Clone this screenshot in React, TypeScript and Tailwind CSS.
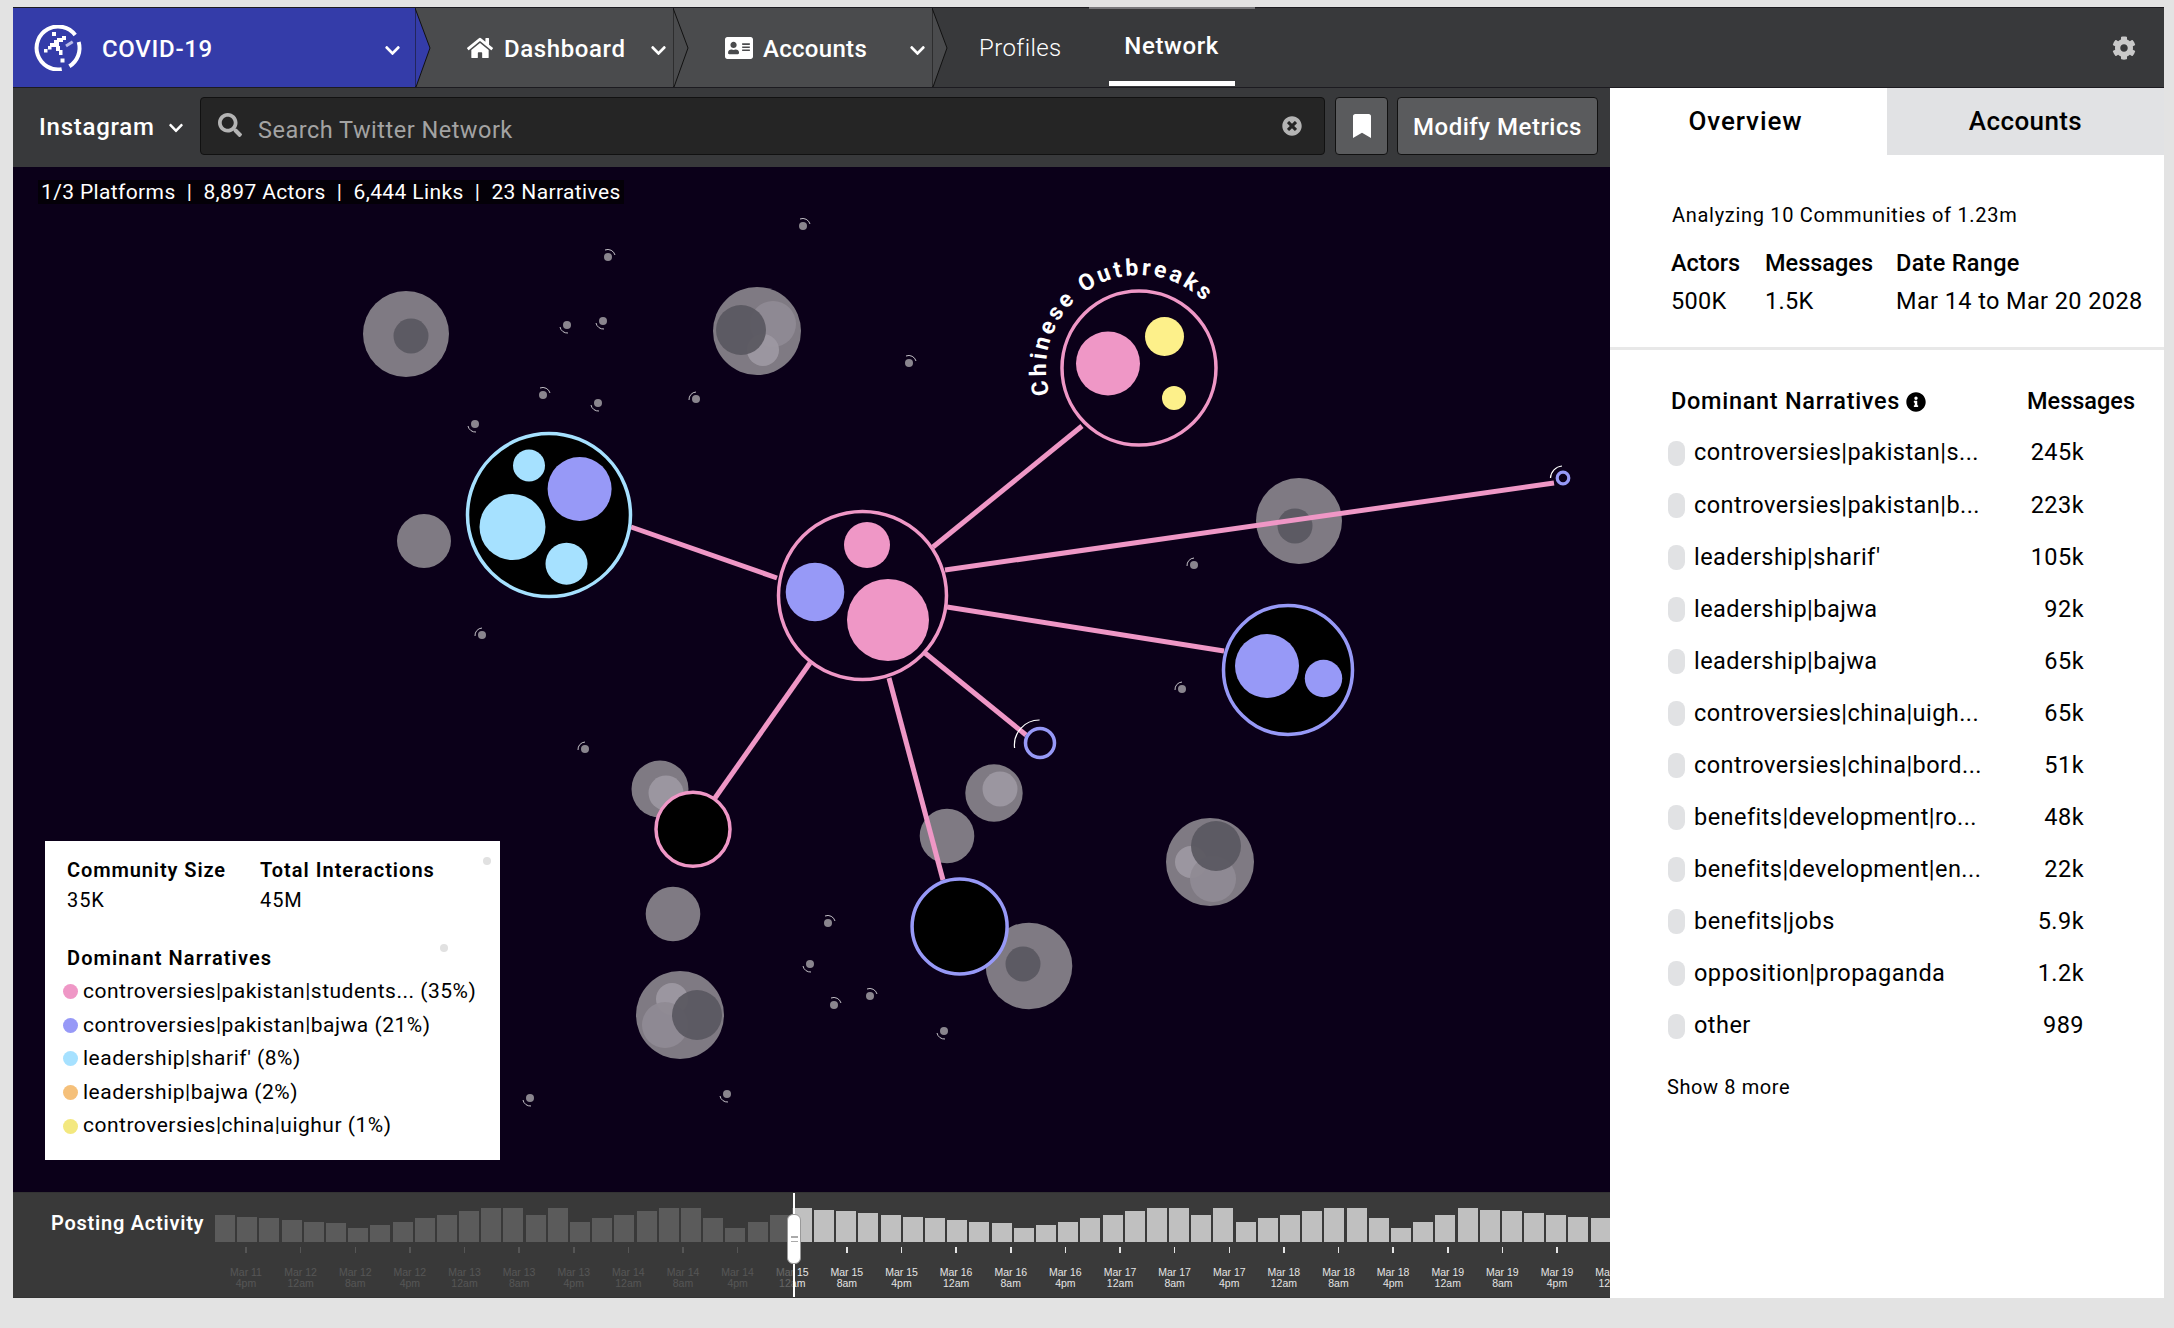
import { FaAddressCard, FaBookmark, FaChevronDown, FaCog, FaHome, FaInfoCircle, FaSearch, FaTimesCircle } from 'react-icons/fa'

const narratives = [
  ['controversies|pakistan|s...', '245k'],
  ['controversies|pakistan|b...', '223k'],
  ["leadership|sharif'", '105k'],
  ['leadership|bajwa', '92k'],
  ['leadership|bajwa', '65k'],
  ['controversies|china|uigh...', '65k'],
  ['controversies|china|bord...', '51k'],
  ['benefits|development|ro...', '48k'],
  ['benefits|development|en...', '22k'],
  ['benefits|jobs', '5.9k'],
  ['opposition|propaganda', '1.2k'],
  ['other', '989'],
]

const legend = [
  ['bg-[#ef97c6]', 'controversies|pakistan|students... (35%)'],
  ['bg-[#9799f7]', 'controversies|pakistan|bajwa (21%)'],
  ['bg-[#a6e1ff]', "leadership|sharif' (8%)"],
  ['bg-[#f5c07a]', 'leadership|bajwa (2%)'],
  ['bg-[#f3e87f]', 'controversies|china|uighur (1%)'],
]

const pattern = [100, 95, 90, 85, 80, 75, 70, 65, 60, 55, 40, 50, 60, 70, 80, 90, 100, 100, 80, 100, 60, 70, 80, 90, 100, 100, 70, 40, 60, 80]
const bars = Array.from({ length: 64 }, (_, i) => pattern[(i + 4) % 30])

const ticks = [
  ['Mar 11', '4pm'], ['Mar 12', '12am'], ['Mar 12', '8am'], ['Mar 12', '4pm'], ['Mar 13', '12am'], ['Mar 13', '8am'],
  ['Mar 13', '4pm'], ['Mar 14', '12am'], ['Mar 14', '8am'], ['Mar 14', '4pm'], ['Mar 15', '12am'], ['Mar 15', '8am'],
  ['Mar 15', '4pm'], ['Mar 16', '12am'], ['Mar 16', '8am'], ['Mar 16', '4pm'], ['Mar 17', '12am'], ['Mar 17', '8am'],
  ['Mar 17', '4pm'], ['Mar 18', '12am'], ['Mar 18', '8am'], ['Mar 18', '4pm'], ['Mar 19', '12am'], ['Mar 19', '8am'],
  ['Mar 19', '4pm'], ['Mar 20', '12am'],
]

// page coordinates, the svg viewBox is offset to match
const tinyDots: [number, number, string][] = [
  [608, 257, 'tr'], [803, 226, 'tr'], [567, 325, 'bl'], [603, 321, 'bl'], [909, 363, 'tr'], [543, 395, 'tr'],
  [598, 403, 'bl'], [696, 399, 'tl'], [475, 424, 'bl'], [482, 635, 'tl'], [585, 749, 'tl'], [828, 923, 'tr'],
  [810, 964, 'bl'], [870, 996, 'tr'], [834, 1005, 'tr'], [944, 1031, 'bl'], [727, 1094, 'bl'], [530, 1098, 'bl'],
  [1194, 565, 'tl'], [1182, 689, 'tl'],
]

const grayNodes: [number, number, number][] = [
  [406, 334, 43], [757, 331, 44], [424, 541, 27], [1299, 521, 43], [660, 789, 28.5], [673, 914, 27.3],
  [680, 1015, 44], [994, 793, 28.7], [947, 836, 27.3], [1029, 966, 43.3], [1210, 862, 44],
]

const innerNodes: [number, number, number, string][] = [
  [411, 336, 17.5, '#5b5861'],
  [773, 324, 23, '#8f8a93'], [763, 350, 16, '#9d98a1'], [741, 330, 25, '#5b5861'],
  [1295, 526, 17.5, '#5b5861'],
  [666, 793, 17.5, '#9d98a1'],
  [672, 999, 16, '#9d98a1'], [665, 1025, 23, '#8f8a93'], [697, 1015, 25, '#5b5861'],
  [1000, 789, 17.5, '#9d98a1'],
  [1023, 964, 17.5, '#5b5861'],
  [1191, 862, 16, '#9d98a1'], [1213, 879, 23, '#8f8a93'], [1216, 846, 25, '#5b5861'],
]

const links: [number, number, number, number][] = [
  [631, 527, 777, 578], [933, 547, 1082, 426], [945, 570, 1554, 483], [947, 607, 1224, 651],
  [925, 653, 1026, 735], [810, 663, 715, 798], [889, 678, 943, 880],
]

function arcFor(x: number, y: number, dir: string) {
  if (dir === 'tl') return `M${x - 7} ${y + 1}A7.5 7.5 0 0 1 ${x} ${y - 7}`
  if (dir === 'tr') return `M${x - 3} ${y - 7}A7.5 7.5 0 0 1 ${x + 7} ${y - 2}`
  return `M${x - 7} ${y + 2}A7.5 7.5 0 0 0 ${x + 1} ${y + 8}`
}

function Logo() {
  return (
    <svg width="50" height="46" viewBox="0 0 50 46" className="shrink-0">
      <g fill="none" stroke="#fff" strokeWidth="4">
        <path d="M42.2 10A21.5 21.5 0 1 0 28.7 44.2" />
        <path d="M36.4 41.2A21.5 21.5 0 0 0 45.7 17" />
      </g>
      <g fill="#fff">
        <rect x="19" y="7" width="4" height="4" />
        <rect x="29" y="11" width="4" height="4" />
        <rect x="24" y="13" width="6" height="4" />
        <rect x="21" y="15" width="5" height="7" />
        <rect x="17" y="18" width="4" height="4" />
        <rect x="11" y="24" width="3.5" height="3.5" />
        <rect x="15" y="21" width="3.5" height="3.5" />
        <rect x="23" y="21" width="4" height="5" />
        <rect x="26" y="25" width="3.5" height="5" />
        <rect x="27.5" y="33.5" width="4" height="4" />
      </g>
      <path d="M33 21L39.7 16.7" stroke="#b9bce8" strokeWidth="3" />
    </svg>
  )
}

function Network() {
  return (
    <svg className="absolute inset-0" width="1597" height="1025" viewBox="13 167 1597 1025">
      {grayNodes.map(([x, y, r]) => (
        <circle key={`${x}-${y}`} cx={x} cy={y} r={r} fill="#7f7a83" />
      ))}
      {innerNodes.map(([x, y, r, c]) => (
        <circle key={`${x}-${y}`} cx={x} cy={y} r={r} fill={c} opacity={0.95} />
      ))}
      {tinyDots.map(([x, y, dir]) => (
        <g key={`${x}-${y}`}>
          <circle cx={x} cy={y} r="4" fill="#8a858e" />
          <path d={arcFor(x, y, dir)} fill="none" stroke="#c4c1c7" strokeWidth="1" />
        </g>
      ))}
      {links.map(([a, b, c, d]) => (
        <line key={`${a}-${b}`} x1={a} y1={b} x2={c} y2={d} stroke="#ef97c6" strokeWidth="5" />
      ))}

      {/* communities */}
      <circle cx="549" cy="515" r="81.5" fill="#000" stroke="#a6e1ff" strokeWidth="3.5" />
      <circle cx="512.5" cy="527" r="33" fill="#a6e1ff" />
      <circle cx="529" cy="465.5" r="16" fill="#a6e1ff" />
      <circle cx="566.5" cy="563.7" r="21" fill="#a6e1ff" />
      <circle cx="579.6" cy="489" r="32" fill="#9799f7" />

      <circle cx="862.5" cy="595.5" r="84" fill="#0b0019" stroke="#ef97c6" strokeWidth="3.5" />
      <circle cx="867" cy="545" r="23" fill="#ef97c6" />
      <circle cx="815" cy="592" r="29.3" fill="#9799f7" />
      <circle cx="888" cy="620" r="41" fill="#ef97c6" />

      <circle cx="1139" cy="368" r="77" fill="#0b0019" stroke="#ef97c6" strokeWidth="3.5" />
      <circle cx="1108" cy="363.5" r="32" fill="#ef97c6" />
      <circle cx="1164.5" cy="336.5" r="19.5" fill="#fdf08a" />
      <circle cx="1174" cy="398" r="12" fill="#fdf08a" />

      <circle cx="1288" cy="670" r="64.5" fill="#000" stroke="#9799f7" strokeWidth="3.5" />
      <circle cx="1267" cy="666" r="32" fill="#9799f7" />
      <circle cx="1323.5" cy="678.5" r="18.7" fill="#9799f7" />

      <circle cx="693" cy="829.3" r="37" fill="#000" stroke="#ef97c6" strokeWidth="3.5" />
      <circle cx="959.6" cy="926.5" r="47.5" fill="#000" stroke="#9799f7" strokeWidth="3.5" />

      <circle cx="1040" cy="743" r="14.5" fill="none" stroke="#9799f7" strokeWidth="3.5" />
      <path d="M1014.6 748A25 25 0 0 1 1039.6 720" fill="none" stroke="#fff" strokeWidth="1.2" />
      <circle cx="1563" cy="478" r="5.8" fill="none" stroke="#9799f7" strokeWidth="3.2" />
      <path d="M1550.5 478A12.5 12.5 0 0 1 1562 466" fill="none" stroke="#fff" strokeWidth="1.2" />

      <path id="outbreaks" d="M1049.7 394A93 93 0 1 1 1228.3 394" fill="none" />
      <text fill="#fff" fontSize="23" fontWeight="700" letterSpacing="3" fontFamily="Roboto, sans-serif">
        <textPath href="#outbreaks">Chinese Outbreaks</textPath>
      </text>
    </svg>
  )
}

function Timeline() {
  return (
    <div className="relative flex h-[106px] overflow-hidden border-y border-[#333] bg-[#3a3a3a]">
      <div className="relative z-20 w-[202px] shrink-0 pl-[38px] pt-[18px] text-[20px] leading-[24px] font-semibold tracking-[0.75px] text-white">Posting Activity</div>
      <div className="min-w-0 flex-1 overflow-hidden pt-[15px]">
        <div className="flex h-[34px] items-end gap-[2.2px]">
          {bars.map((h, i) => (
            <div key={i} className="w-[20px] shrink-0 bg-[#c0c0c0]" style={{ height: `${h * 0.34}px` }} />
          ))}
        </div>
        <div className="ml-[3.7px] flex font-['Liberation_Sans',sans-serif] text-[10.5px] leading-[11px]">
          {ticks.map(([d, t], i) => (
            <div key={i} className={`flex w-[54.63px] shrink-0 flex-col items-center ${i < 10 ? 'text-[#a8a8a8]' : 'text-[#e4e4e4]'}`}>
              <div className={`mt-[5px] h-[6px] w-[1.5px] ${i < 10 ? 'bg-[#a8a8a8]' : 'bg-[#e4e4e4]'}`} />
              <div className="mt-[14px]">{d}</div>
              <div>{t}</div>
            </div>
          ))}
        </div>
      </div>
      <div className="absolute inset-y-0 left-0 z-10 w-[781px] bg-[#3a3a3a]/75" />
      <div className="absolute inset-y-0 left-[780px] z-10 w-[2px] bg-white" />
      <div className="absolute left-[774px] top-[21px] z-10 flex h-[50px] w-[14px] flex-col items-center justify-center gap-[3px] rounded-[6px] border border-[#999] bg-white">
        <div className="h-[1.5px] w-[7px] bg-[#aaa]" />
        <div className="h-[1.5px] w-[7px] bg-[#aaa]" />
      </div>
    </div>
  )
}

export default function App() {
  return (
    <div className="h-[1328px] w-[2174px] overflow-hidden bg-[#e3e3e3] pl-[13px] pt-[7px] font-[Roboto,sans-serif]">
      <div className="flex h-[81px] w-[2151px] border-y border-[#1c1b20] bg-[#38393b] text-white">
        <div className="relative z-30 flex w-[402px] items-center bg-[#343ca9] pl-[20px]">
          <Logo />
          <span className="ml-[19px] pt-[2px] text-[24px] font-medium tracking-[0.7px]">COVID-19</span>
          <FaChevronDown className="absolute left-[371px] top-[34px] text-[17px]" />
          <svg className="absolute left-full top-0" width="16" height="79" viewBox="0 0 16 79">
            <path d="M0 0L15 40L1 79H0Z" fill="#343ca9" stroke="#111" strokeWidth="1" />
          </svg>
        </div>
        <div className="relative z-20 flex w-[258px] items-center bg-[#4a4b4d] pl-[52px]">
          <FaHome className="text-[26px]" />
          <span className="ml-[11px] pt-[2px] text-[24px] font-medium tracking-[0.6px]">Dashboard</span>
          <FaChevronDown className="absolute left-[235px] top-[34px] text-[17px]" />
          <svg className="absolute left-full top-0" width="16" height="79" viewBox="0 0 16 79">
            <path d="M0 0L15 40L1 79H0Z" fill="#4a4b4d" stroke="#111" strokeWidth="1" />
          </svg>
        </div>
        <div className="relative z-10 flex w-[259px] items-center bg-[#4a4b4d] pl-[52px]">
          <FaAddressCard className="text-[28px]" />
          <span className="ml-[10px] pt-[2px] text-[24px] font-medium tracking-[0.3px]">Accounts</span>
          <FaChevronDown className="absolute left-[236px] top-[34px] text-[17px]" />
          <svg className="absolute left-full top-0" width="16" height="79" viewBox="0 0 16 79">
            <path d="M0 0L15 40L1 79H0Z" fill="#4a4b4d" stroke="#111" strokeWidth="1" />
          </svg>
        </div>
        <div className="ml-[47px] flex items-center text-[24px] font-light tracking-[0.4px]">Profiles</div>
        <div className="relative ml-[47px] flex w-[126px] items-center justify-center pb-[3px] text-[24px] font-medium tracking-[0.6px]">
          Network
          <div className="absolute inset-x-0 bottom-[1px] h-[5px] bg-white" />
          <div className="absolute -inset-x-[20px] -top-[1px] h-[2px] bg-[#77777a]" />
        </div>
        <div className="ml-auto flex items-center pr-[28px]">
          <FaCog className="text-[24px] text-[#c9c9c9]" />
        </div>
      </div>

      <div className="flex h-[1210px] w-[2151px]">
        <div className="flex w-[1597px] flex-col">
          <div className="flex h-[79px] items-start bg-[#38393b] pt-[9px]">
            <div className="flex h-[58px] w-[187px] shrink-0 items-center pt-[1px] pl-[26px] text-[24px] font-medium tracking-[0.75px] text-white">
              Instagram
              <FaChevronDown className="ml-[13px] mt-[3px] text-[16px]" />
            </div>
            <div className="flex h-[58px] w-[1125px] items-center rounded-[4px] border border-[#111] bg-[#252525] pl-[17px] pr-[22px]">
              <FaSearch className="mb-[3px] text-[24px] text-[#b4b4b4]" />
              <span className="ml-[16px] mt-[10px] text-[23.5px] tracking-[0.5px] text-[#a3a3a3]">Search Twitter Network</span>
              <FaTimesCircle className="mb-[1px] ml-auto text-[20px] text-[#b4b4b4]" />
            </div>
            <div className="ml-[10px] flex h-[58px] w-[53px] items-center justify-center rounded-[4px] border border-[#111] bg-[#5a5b5d]">
              <FaBookmark className="text-[24px] text-white" />
            </div>
            <div className="ml-[9px] flex h-[58px] w-[201px] items-center justify-center rounded-[4px] border border-[#111] bg-[#5a5b5d] pt-[1px] text-[24px] font-medium tracking-[0.5px] text-white">
              Modify Metrics
            </div>
          </div>

          <div className="relative h-[1025px] bg-[#0b0019]">
            <Network />
            <div className="absolute left-[25px] top-[13px] bg-[#040008] px-[3px] text-[21px] leading-[24px] tracking-[0.37px] text-white">
              1/3 Platforms&nbsp; | &nbsp;8,897 Actors&nbsp; | &nbsp;6,444 Links&nbsp; | &nbsp;23 Narratives
            </div>
            <div className="absolute left-[32px] top-[674px] h-[319px] w-[455px] bg-white text-black">
              <div className="absolute right-[9px] top-[16px] size-[8px] rounded-full bg-[#e1e1e1]" />
              <div className="absolute left-[395px] top-[103px] size-[8px] rounded-full bg-[#e1e1e1]" />
              <div className="flex pl-[22px] pt-[16px] text-[20px] leading-[26px]">
                <div className="w-[193px]">
                  <div className="font-semibold tracking-[0.9px]">Community Size</div>
                  <div className="mt-[4px] tracking-[0.9px]">35K</div>
                </div>
                <div>
                  <div className="font-semibold tracking-[1px]">Total Interactions</div>
                  <div className="mt-[4px] tracking-[0.9px]">45M</div>
                </div>
              </div>
              <div className="pl-[22px] pt-[32px] text-[20px] font-semibold leading-[26px] tracking-[1.1px]">Dominant Narratives</div>
              <div className="mt-[4px] pl-[18px]">
                {legend.map(([c, t]) => (
                  <div key={t} className="flex h-[33.6px] items-center gap-[5px] text-[21px] tracking-[0.5px]">
                    <div className={`size-[15px] rounded-full ${c}`} />
                    {t}
                  </div>
                ))}
              </div>
            </div>
          </div>
          <Timeline />
        </div>

        <div className="w-[554px] bg-white text-black">
          <div className="flex h-[67px]">
            <div className="flex w-[277px] items-center justify-center pr-[6px] text-[26px] font-medium tracking-[0.9px]">Overview</div>
            <div className="flex w-[277px] items-center justify-center bg-[#e1e2e4] text-[26px] font-medium tracking-[0.4px]">Accounts</div>
          </div>
          <div className="border-b-[3px] border-[#e8e8e8] pb-[27px] pl-[61px]">
            <div className="pl-[1px] pt-[47px] text-[20px] leading-[26px] tracking-[0.7px]">Analyzing 10 Communities of 1.23m</div>
            <div className="mt-[16px] flex text-[23.5px] leading-[38px]">
              <div className="w-[94px]">
                <div className="font-medium">Actors</div>
                <div className="tracking-[0.3px]">500K</div>
              </div>
              <div className="w-[131px]">
                <div className="font-medium">Messages</div>
                <div className="tracking-[0.3px]">1.5K</div>
              </div>
              <div>
                <div className="font-medium tracking-[0.3px]">Date Range</div>
                <div className="tracking-[0.4px]">Mar 14 to Mar 20 2028</div>
              </div>
            </div>
          </div>
          <div className="pl-[58px]">
            <div className="mt-[37px] flex h-[30px] items-center pl-[3px] text-[23.5px] font-medium tracking-[0.7px]">
              Dominant Narratives
              <FaInfoCircle className="ml-[6px] text-[20px]" />
              <span className="absolute left-[2027px] tracking-normal">Messages</span>
            </div>
            <div className="mt-[10px] w-[416px]">
              {narratives.map(([n, v], i) => (
                <div key={i} className="flex h-[52.1px] items-center text-[23.5px] tracking-[0.45px]">
                  <div className="h-[25px] w-[17px] rounded-[8px] bg-[#e1e2e4]" />
                  <div className="ml-[9px] flex-1">{n}</div>
                  <div>{v}</div>
                </div>
              ))}
            </div>
            <div className="-ml-[1px] mt-[22px] text-[20px] leading-[26px] tracking-[0.6px]">Show 8 more</div>
          </div>
        </div>
      </div>
    </div>
  )
}
